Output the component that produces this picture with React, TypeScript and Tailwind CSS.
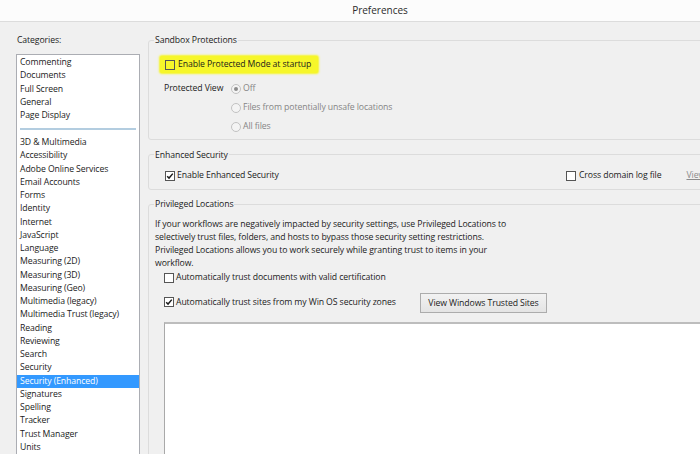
import React from "react";

const categoriesTop = ["Commenting", "Documents", "Full Screen", "General", "Page Display"];

const categories = [
  "3D & Multimedia",
  "Accessibility",
  "Adobe Online Services",
  "Email Accounts",
  "Forms",
  "Identity",
  "Internet",
  "JavaScript",
  "Language",
  "Measuring (2D)",
  "Measuring (3D)",
  "Measuring (Geo)",
  "Multimedia (legacy)",
  "Multimedia Trust (legacy)",
  "Reading",
  "Reviewing",
  "Search",
  "Security",
  "Security (Enhanced)",
  "Signatures",
  "Spelling",
  "Tracker",
  "Trust Manager",
  "Units",
];

const selected = "Security (Enhanced)";

function Checkbox({ checked = false, clear = false }: { checked?: boolean; clear?: boolean }) {
  return (
    <span
      className={`flex h-[10px] w-[10px] shrink-0 items-center justify-center border border-[#555] ${
        clear ? "bg-transparent" : "bg-white"
      }`}
    >
      {checked && (
        <svg viewBox="0 0 10 10" className="h-[8px] w-[8px]">
          <path d="M1.5 5.2 L3.8 7.6 L8.5 2" fill="none" stroke="#1a1a1a" strokeWidth="1.8" />
        </svg>
      )}
    </span>
  );
}

function Radio({ on = false }: { on?: boolean }) {
  return (
    <span className="flex h-[10px] w-[10px] shrink-0 items-center justify-center rounded-full border border-[#c2c2c2] bg-[#f4f4f4]">
      {on && <span className="h-[4px] w-[4px] rounded-full bg-[#8c8c8c]" />}
    </span>
  );
}

function CategoryRow({ label }: { label: string }) {
  const active = label === selected;
  return (
    <div
      className={`h-[13.25px] whitespace-nowrap px-[3px] leading-[13.25px] ${
        active ? "bg-[#3399ff] text-white" : ""
      }`}
    >
      {label}
    </div>
  );
}

export default function App() {
  return (
    <div className="flex h-[454px] w-[700px] flex-col overflow-hidden bg-[#f0f0f0] font-['Open_Sans',sans-serif] text-[8.7px] tracking-[-0.1px] text-[#1b1b1b]">
      {/* title bar */}
      <div className="flex h-[22px] shrink-0 items-center justify-center border-b border-[#dcdcdc] bg-[#fcfcfc] pl-[60px] text-[10px] tracking-normal text-[#2b2b2b]">
        Preferences
      </div>

      <div className="flex min-h-0 flex-1">
        {/* categories */}
        <aside className="flex w-[148px] shrink-0 flex-col pl-[16px] pt-[12px]">
          <div className="pl-[1px] leading-[12px]">Categories:</div>
          <div className="mt-[8px] w-[124px] flex-1 border border-[#abadb3] bg-white pt-[1px]">
            {categoriesTop.map((c) => (
              <CategoryRow key={c} label={c} />
            ))}
            <div className="flex h-[13.8px] items-center px-[3px]">
              <div className="h-[1.5px] w-full bg-[#b3cde0]" />
            </div>
            {categories.map((c) => (
              <CategoryRow key={c} label={c} />
            ))}
          </div>
        </aside>

        {/* settings */}
        <main className="flex w-[640px] shrink-0 flex-col pt-[12px]">
          <fieldset className="rounded-[3px] border border-[#dcdcdc] pb-[5px]">
            <legend className="ml-[5px] px-[1px] leading-[12px]">Sandbox Protections</legend>
            <div className="ml-[11px] mt-[10px] flex h-[17px] w-fit items-center gap-[3px] rounded-[2px] bg-[#f6f62a] pl-[5px] pr-[7px] shadow-[0_0_2px_1px_#f6f62a]">
              <Checkbox clear />
              <span>Enable Protected Mode at startup</span>
            </div>
            <div className="mt-[9.5px] flex h-[13px] items-center pl-[15px]">
              <span className="w-[67px]">Protected View</span>
              <span className="flex items-center gap-[2px] text-[#858585]">
                <Radio on />
                Off
              </span>
            </div>
            <div className="mt-[6px] flex h-[13px] items-center gap-[2px] pl-[82px] text-[#858585]">
              <Radio />
              Files from potentially unsafe locations
            </div>
            <div className="mt-[6px] flex h-[13px] items-center gap-[2px] pl-[82px] text-[#858585]">
              <Radio />
              All files
            </div>
          </fieldset>

          <fieldset className="mt-[9px] rounded-[3px] border border-[#dcdcdc] pb-[7px]">
            <legend className="ml-[5px] px-[1px] leading-[12px]">Enhanced Security</legend>
            <div className="mt-[8.5px] flex h-[13px] items-center pl-[16px]">
              <span className="flex w-[401px] items-center gap-[2px]">
                <Checkbox checked />
                Enable Enhanced Security
              </span>
              <span className="flex items-center gap-[3px]">
                <Checkbox />
                Cross domain log file
              </span>
              <span className="ml-[25px] text-[#8a8a8a] underline">View log</span>
            </div>
          </fieldset>

          <fieldset className="mt-[8px] rounded-[3px] border border-[#dcdcdc]">
            <legend className="ml-[5px] px-[1px] leading-[12px]">Privileged Locations</legend>
            <p className="mt-[7.5px] whitespace-nowrap pl-[6px] leading-[13px]">
              If your workflows are negatively impacted by security settings, use Privileged Locations to
              <br />
              selectively trust files, folders, and hosts to bypass those security setting restrictions.
              <br />
              Privileged Locations allows you to work securely while granting trust to items in your
              <br />
              workflow.
            </p>
            <div className="mt-[1.5px] flex h-[13px] items-center gap-[2px] pl-[15px]">
              <Checkbox />
              Automatically trust documents with valid certification
            </div>
            <div className="mt-[8.5px] flex h-[20px] items-center pl-[15px]">
              <span className="flex w-[256px] items-center gap-[2px]">
                <Checkbox checked />
                Automatically trust sites from my Win OS security zones
              </span>
              <button className="h-[20px] w-[127px] border border-[#acacac] bg-gradient-to-b from-[#f2f2f2] to-[#e4e4e4] text-center leading-[18px]">
                View Windows Trusted Sites
              </button>
            </div>
            <div className="ml-[15px] mt-[9px] h-[200px] border border-[#a9a9a9] border-t-2 border-t-[#bdbdbd] bg-white" />
          </fieldset>
        </main>
      </div>
    </div>
  );
}
